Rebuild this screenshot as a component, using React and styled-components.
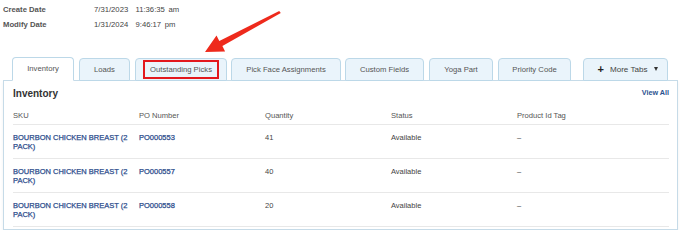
import React from "react";
import styled, { createGlobalStyle } from "styled-components";

const Global = createGlobalStyle`
  html, body { margin: 0; padding: 0; background: #fff; }
  body { font-family: "Liberation Sans", Arial, sans-serif; color: #444; }
`;

const Page = styled.div`
  position: relative;
  width: 675px;
  padding: 1.5px 0 0 3px;
`;

const Meta = styled.div`
  display: grid;
  grid-template-columns: 91px auto;
  line-height: 15px;
  font-size: 7.7px;
`;

const MetaLabel = styled.div`
  font-weight: bold;
  color: #555;
`;

const MetaValue = styled.div`
  color: #444;
  word-spacing: 1.5px;
`;

const TabBar = styled.div`
  display: flex;
  align-items: flex-end;
  margin-top: 25px;
  padding-left: 9px;
  position: relative;
  z-index: 1;
  margin-bottom: -1px;
`;

const Tab = styled.div`
  box-sizing: border-box;
  width: ${(p) => p.$w}px;
  margin-right: ${(p) => p.$gap}px;
  height: ${(p) => (p.$active ? 24 : 23)}px;
  display: flex;
  align-items: center;
  justify-content: center;
  font-size: 7.7px;
  color: #555;
  background: ${(p) => (p.$active ? "#fff" : "#eaf4fb")};
  border: 1px solid #bcd8e8;
  border-bottom-color: ${(p) => (p.$active ? "#fff" : "#bcd8e8")};
  border-radius: 4px 4px 0 0;
`;

const Highlight = styled.span`
  border: 2px solid #e3181d;
  padding: 3px 5px;
  line-height: 9px;
`;

const MoreTab = styled(Tab)`
  margin-left: 3px;
  font-size: 8.1px;
  color: #444;
  padding-left: 4px;
`;

const Plus = styled.span`
  font-size: 11px;
  font-weight: bold;
  color: #222;
  margin-right: 6px;
  line-height: 10px;
`;

const Caret = styled.span`
  width: 0;
  height: 0;
  border-left: 2.5px solid transparent;
  border-right: 2.5px solid transparent;
  border-top: 4px solid #333;
  margin-left: 6px;
`;

const Panel = styled.div`
  border: 1px solid #c6dbe8;
  padding: 7px 8px 2px 9px;
  box-shadow: 0 2px 3px rgba(0, 0, 0, 0.06);
`;

const PanelHead = styled.div`
  display: flex;
  justify-content: space-between;
  align-items: center;
  height: 12px;
`;

const Title = styled.h2`
  margin: 0;
  font-size: 10px;
  font-weight: bold;
  color: #333;
  line-height: 12px;
`;

const ViewAll = styled.a`
  font-size: 7.2px;
  font-weight: bold;
  color: #2a5290;
  text-decoration: none;
  margin-top: -2px;
`;

const Grid = styled.div`
  display: grid;
  grid-template-columns: repeat(4, 126px) 1fr;
  margin-top: 11px;
`;

const HeadCell = styled.div`
  font-size: 7.6px;
  line-height: 9px;
  color: #555;
  padding-bottom: 4px;
  border-bottom: 1px solid #e8e8e8;
`;

const Cell = styled.div`
  font-size: 7.5px;
  line-height: 9px;
  padding: 8px 10px 7px 0;
  height: 18px;
  border-bottom: 1px solid #e8e8e8;
  color: ${(p) => (p.$link ? "#2c4c8c" : "#444")};
  -webkit-text-stroke: ${(p) => (p.$link ? "0.25px #2c4c8c" : "0")};
`;

const ArrowSvg = styled.svg`
  position: absolute;
  left: 0;
  top: 0;
  pointer-events: none;
  z-index: 2;
`;

const tabs = [
  { label: "Inventory", w: 62, gap: 5, active: true },
  { label: "Loads", w: 51, gap: 5 },
  { label: "Outstanding Picks", w: 92, gap: 4, highlight: true },
  { label: "Pick Face Assignments", w: 110, gap: 4 },
  { label: "Custom Fields", w: 79, gap: 5 },
  { label: "Yoga Part", w: 64, gap: 5 },
  { label: "Priority Code", w: 73, gap: 9 },
];

const rows = [
  { po: "PO000553", qty: "41" },
  { po: "PO000557", qty: "40" },
  { po: "PO000558", qty: "20" },
];

export default function App() {
  return (
    <>
      <Global />
      <Page>
        <Meta>
          <MetaLabel>Create Date</MetaLabel>
          <MetaValue>7/31/2023&nbsp; 11:36:35 am</MetaValue>
          <MetaLabel>Modify Date</MetaLabel>
          <MetaValue>1/31/2024&nbsp; 9:46:17 pm</MetaValue>
        </Meta>
        <TabBar>
          {tabs.map((t) => (
            <Tab key={t.label} $w={t.w} $gap={t.gap} $active={t.active}>
              {t.highlight ? <Highlight>{t.label}</Highlight> : t.label}
            </Tab>
          ))}
          <MoreTab $w={85} $gap={0}>
            <Plus>+</Plus>
            More Tabs
            <Caret />
          </MoreTab>
        </TabBar>
        <Panel>
          <PanelHead>
            <Title>Inventory</Title>
            <ViewAll href="#">View All</ViewAll>
          </PanelHead>
          <Grid>
            <HeadCell>SKU</HeadCell>
            <HeadCell>PO Number</HeadCell>
            <HeadCell>Quantity</HeadCell>
            <HeadCell>Status</HeadCell>
            <HeadCell>Product Id Tag</HeadCell>
            {rows.map((r) => (
              <React.Fragment key={r.po}>
                <Cell $link>BOURBON CHICKEN BREAST (2 PACK)</Cell>
                <Cell $link>{r.po}</Cell>
                <Cell>{r.qty}</Cell>
                <Cell>Available</Cell>
                <Cell>–</Cell>
              </React.Fragment>
            ))}
          </Grid>
        </Panel>
        <ArrowSvg width="682" height="241" viewBox="0 0 682 241">
          <polygon
            points="280.8,13 279.2,11 219.3,41 216.5,35.6 205,52 225.1,51.4 222.4,46.1"
            fill="#ee2a1c"
          />
        </ArrowSvg>
      </Page>
    </>
  );
}
